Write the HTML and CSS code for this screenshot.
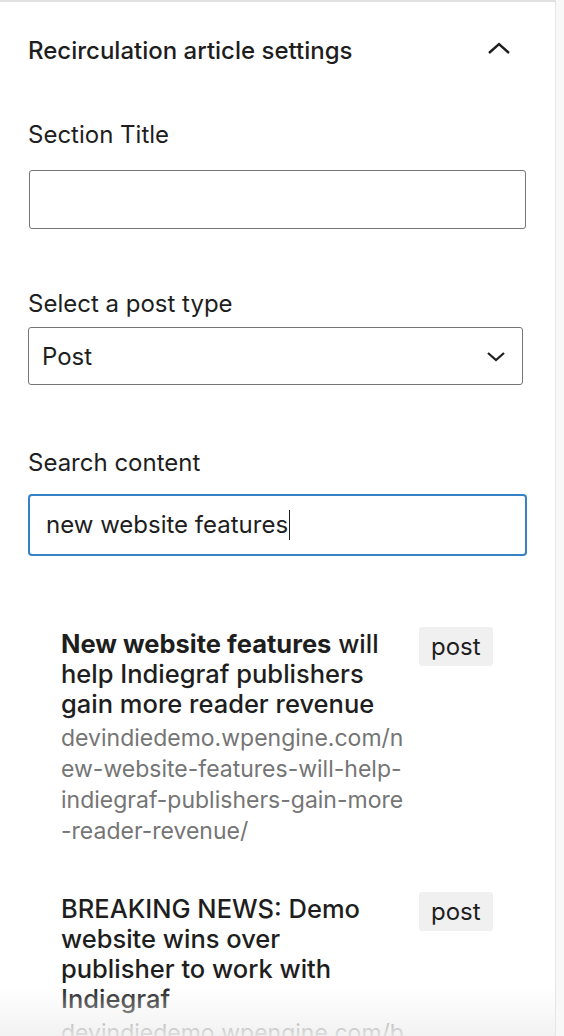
FILE: index.html
```html
<!DOCTYPE html>
<html lang="en">
<head>
<meta charset="utf-8">
<title>Recirculation article settings</title>
<link rel="stylesheet" href="styles.css">
</head>
<body>
<div class="sidebar">
  <div class="panel">
    <div class="panel-header">
      <h2 class="panel-title">Recirculation article settings</h2>
      <svg class="chev-up" width="24" height="14" viewBox="0 0 24 14"><path d="M2 12 L12 3 L22 12" fill="none" stroke="#1e1e1e" stroke-width="2.4"/></svg>
    </div>
    <div class="field field-title">
      <label class="label">Section Title</label>
      <div class="input"></div>
    </div>
    <div class="field field-type">
      <label class="label">Select a post type</label>
      <div class="select"><span>Post</span>
        <svg class="chev-down" width="20" height="11" viewBox="0 0 20 11"><path d="M2 2 L10 9 L18 2" fill="none" stroke="#1e1e1e" stroke-width="2.2"/></svg>
      </div>
    </div>
    <div class="field field-search">
      <label class="label">Search content</label>
      <div class="input focused"><span class="typed">new website features</span></div>
    </div>
    <ul class="results">
      <li class="result">
        <div class="result-text">
          <div class="result-title"><strong>New website features</strong> will help Indiegraf publishers gain more reader revenue</div>
          <div class="result-url">devindiedemo.wpengine.com/new-website-features-will-help-indiegraf-publishers-gain-more-reader-revenue/</div>
        </div>
        <span class="tag">post</span>
      </li>
      <li class="result">
        <div class="result-text">
          <div class="result-title">BREAKING NEWS: Demo website wins over publisher to work with Indiegraf</div>
          <div class="result-url">devindiedemo.wpengine.com/breaking-news-demo-website-wins-over-publisher-to-work-with-indiegraf/</div>
        </div>
        <span class="tag">post</span>
      </li>
    </ul>
  </div>
  <div class="fade"></div>
</div>
</body>
</html>
```
FILE: styles.css
```css
html, body {
  margin: 0;
  padding: 0;
  height: 100%;
}
body {
  background: #f8f8f8;
  font-family: "Inter", "Noto Sans", sans-serif;
  color: #1e1e1e;
  overflow: hidden;
}
.sidebar {
  position: relative;
  width: 556px;
  height: 1036px;
  box-sizing: border-box;
  background: #fff;
  border-top: 2px solid #e0e0e0;
  border-right: 1px solid #e6e6e6;
  overflow: hidden;
}
.panel {
  padding: 0 0 0 28px;
}
.panel-header {
  display: flex;
  align-items: center;
  justify-content: space-between;
  height: 30px;
  margin-top: 34px;
  padding-right: 44px;
}
.panel-title {
  margin: 0;
  font-size: 24px;
  font-weight: 500;
  line-height: 30px;
}
.chev-up {
  display: block;
  margin-top: -6px;
}
.field {
  display: flex;
  flex-direction: column;
}
.label {
  font-size: 24px;
  line-height: 30px;
}
.field-title {
  margin-top: 54px;
}
.field-title .label {
  margin-bottom: 20px;
}
.field-type {
  margin-top: 60px;
}
.field-type .label {
  margin-bottom: 8px;
}
.field-search {
  margin-top: 63px;
}
.field-search .label {
  margin-bottom: 16px;
}
.input {
  box-sizing: border-box;
  width: 497px;
  height: 59px;
  border: 1.5px solid #757575;
  border-radius: 3px;
  margin-left: 1px;
}
.select {
  box-sizing: border-box;
  width: 495px;
  height: 58px;
  border: 1.5px solid #757575;
  border-radius: 3px;
  display: flex;
  align-items: center;
  justify-content: space-between;
  padding: 0 16px 0 13px;
  font-size: 24px;
}
.chev-down {
  display: block;
}
.input.focused {
  width: 499px;
  height: 62px;
  margin-left: 0;
  border: 2.5px solid #3582c4;
  border-radius: 4px;
  display: flex;
  align-items: center;
  padding-left: 16px;
  font-size: 24px;
}
.typed {
  border-right: 1.5px solid #1e1e1e;
  line-height: 30px;
  padding-right: 1px;
}
.results {
  list-style: none;
  margin: 73px 0 0;
  padding: 0 0 0 33px;
}
.result {
  display: flex;
  align-items: flex-start;
  gap: 14px;
  margin-bottom: 47px;
}
.result-text {
  width: 344px;
}
.result-title {
  width: 330px;
  font-size: 25.5px;
  line-height: 30px;
  font-weight: 500;
}
.result-title strong {
  font-weight: 700;
}
.result-url {
  margin-top: 4px;
  font-size: 23px;
  line-height: 31px;
  color: #757575;
  word-break: break-all;
}
.tag {
  flex: none;
  margin-top: -2px;
  background: #f0f0f0;
  border-radius: 3px;
  padding: 0 12px;
  height: 39px;
  line-height: 39px;
  font-size: 24px;
}
.fade {
  position: absolute;
  left: 0;
  right: 0;
  bottom: 0;
  height: 50px;
  background: linear-gradient(to bottom, rgba(240,240,240,0), rgba(240,240,240,0.85));
  pointer-events: none;
}
```
